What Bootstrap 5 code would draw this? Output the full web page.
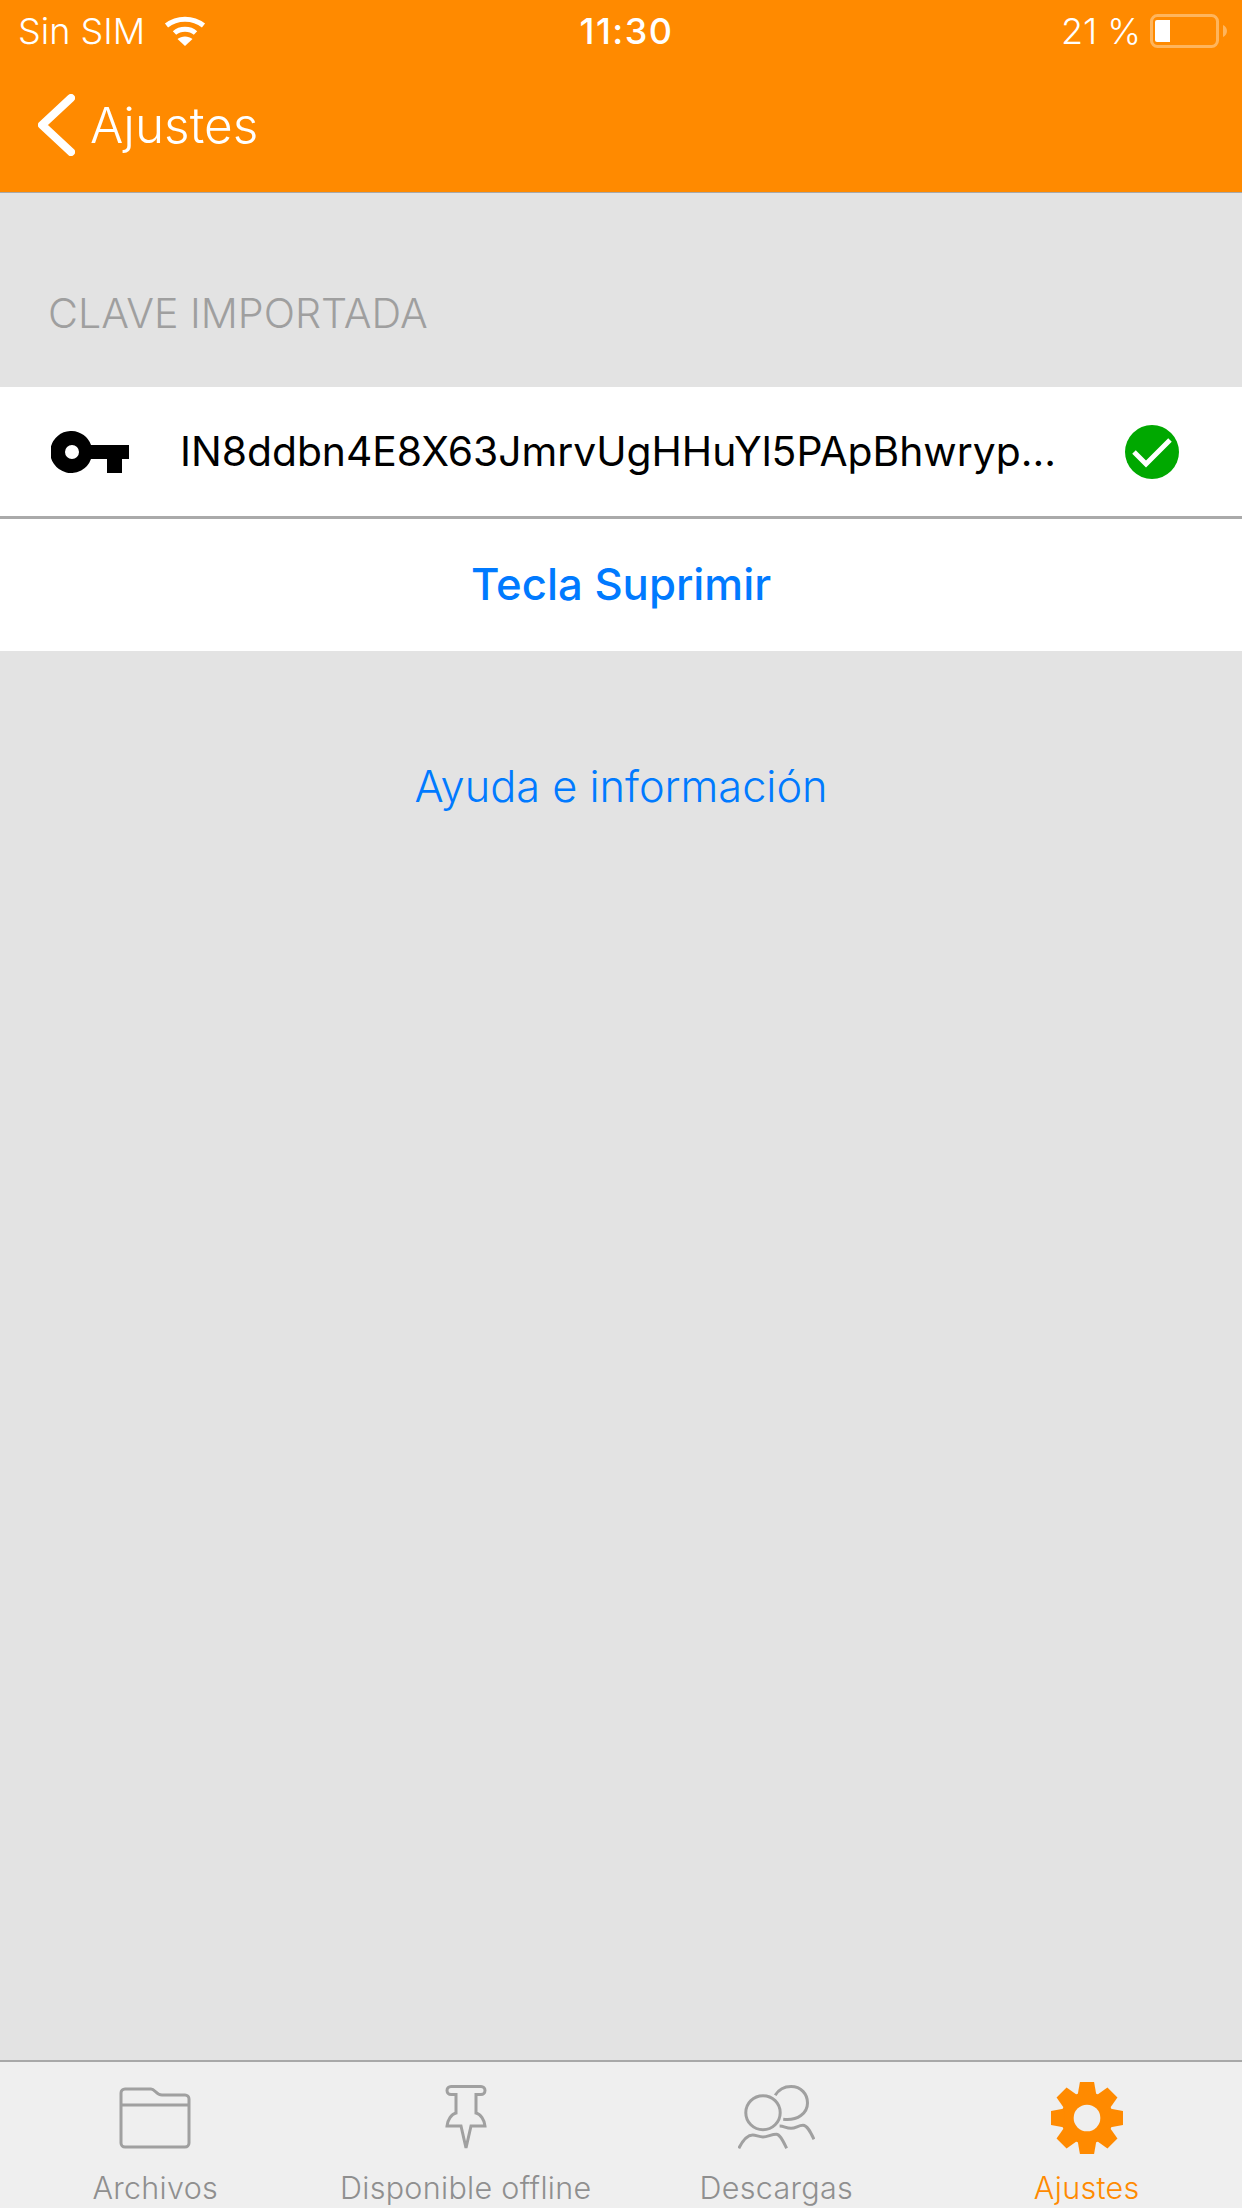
<!DOCTYPE html>
<html lang="es">
<head>
    <meta charset="UTF-8">
    <meta name="viewport" content="width=device-width, initial-scale=1.0">
    <title>Ajustes</title>
    <link href="https://cdn.jsdelivr.net/npm/bootstrap@5.3.3/dist/css/bootstrap.min.css" rel="stylesheet">
    <style>
        body {
            height: 2208px;
            overflow: hidden;
            background-color: #e3e3e3;
            font-family: Inter, "Liberation Sans", sans-serif;
        }
        .app-header {
            height: 193px;
            background-color: #ff8a00;
            border-bottom: 1px solid #a8a8a8;
            color: #fff;
        }
        .status-bar {
            height: 60px;
            padding: 2px 15px 0 18px;
            font-size: 36px;
            font-weight: 300;
            line-height: 60px;
        }
        .status-side { flex: 1 1 0; }
        .status-time { font-weight: 500; letter-spacing: 1.5px; margin-left: 8px; }
        .wifi-gap { gap: 19px; }
        .battery-gap { gap: 9px; }
        .back-row {
            height: 132px;
            padding: 0 0 2px 38px;
            font-size: 49.5px;
            font-weight: 300;
            color: #fff;
            text-decoration: none;
            gap: 15px;
        }
        .section-title {
            height: 194px;
            padding: 0 0 0 48px;
            font-size: 41.2px;
            font-weight: 300;
            color: #9f9f9f;
            line-height: 240px;
        }
        .list-group-flush > .key-row {
            height: 132px;
            padding: 0 63px 0 51px;
            border-bottom: 3px solid #aaa;
            font-size: 40.8px;
            color: #000;
        }
        .key-text { width: 895px; margin-left: 51px; }
        .list-group-flush > .delete-row {
            height: 132px;
            border: 0;
            font-size: 43.7px;
            font-weight: 450;
            color: #007aff;
        }
        .help-link {
            margin-top: 103px;
            font-size: 43.3px;
            font-weight: 300;
            color: #007aff;
            text-decoration: none;
        }
        .tab-bar {
            height: 148px;
            background-color: #efefef;
            border-top: 2px solid #a8a8a8;
            font-size: 30.5px;
            font-weight: 300;
            letter-spacing: 0.3px;
            line-height: 28px;
            color: #8f8f8f;
        }
        .tab-item { flex: 1 1 0; height: 100%; }
        .tab-icon { height: 112px; }
        .tab-item.is-active { color: #ff8a00; }
    </style>
</head>
<body class="d-flex flex-column">
    <header class="app-header">
        <div class="status-bar d-flex align-items-center">
            <div class="status-side wifi-gap d-flex align-items-center">
                <span>Sin SIM</span>
                <svg width="42" height="30" viewBox="0 0 42 30">
                    <path d="M2.500 9.500C13 1 29 1 39.500 9.500" fill="none" stroke="#fff" stroke-width="5"/>
                    <path d="M10.500 17C16 12 26 12 31.500 17" fill="none" stroke="#fff" stroke-width="5"/>
                    <path d="M21 30L13.500 23C17.500 19.500 24.500 19.500 28.500 23z" fill="#fff"/>
                </svg>
            </div>
            <div class="status-time">11:30</div>
            <div class="status-side battery-gap d-flex align-items-center justify-content-end">
                <span>21 %</span>
                <svg width="77" height="34" viewBox="0 0 77 34">
                    <rect x="1.500" y="1.500" width="66" height="31" rx="6" fill="none" stroke="#ffb55c" stroke-width="3"/>
                    <path d="M5 8a2 2 0 0 1 2-2H20V28H7a2 2 0 0 1-2-2z" fill="#fff"/>
                    <path d="M73 11c2.500 1 4 3.500 4 6s-1.500 5-4 6z" fill="#ffb55c"/>
                </svg>
            </div>
        </div>
        <a class="back-row d-flex align-items-center" href="#">
            <svg width="37" height="62" viewBox="0 0 37 62">
                <path d="M33 4L4 31L33 58" fill="none" stroke="#fff" stroke-width="8" stroke-linecap="round" stroke-linejoin="round"/>
            </svg>
            <span>Ajustes</span>
        </a>
    </header>

    <main class="flex-grow-1 d-flex flex-column">
        <div class="section-title">CLAVE IMPORTADA</div>
        <ul class="list-group list-group-flush">
            <li class="list-group-item key-row d-flex align-items-center">
                <svg width="78" height="42" viewBox="0 0 78 42" class="flex-shrink-0">
                    <path fill-rule="evenodd" d="M21 0A21 21 0 0 1 40 14H78V28H71V42H56V28H40A21 21 0 1 1 21 0zM21 14A7 7 0 1 0 21 28A7 7 0 1 0 21 14z" fill="#000"/>
                </svg>
                <span class="key-text text-truncate">IN8ddbn4E8X63JmrvUgHHuYl5PApBhwryp...</span>
                <svg width="54" height="54" viewBox="0 0 54 54" class="ms-auto flex-shrink-0">
                    <circle cx="27" cy="27" r="27" fill="#00a800"/>
                    <path d="M9 27L21 39L45 15" fill="none" stroke="#fff" stroke-width="5"/>
                </svg>
            </li>
            <li class="list-group-item delete-row d-flex align-items-center justify-content-center">Tecla Suprimir</li>
        </ul>
        <a class="help-link text-center" href="#">Ayuda e información</a>
    </main>

    <nav class="tab-bar d-flex">
        <div class="tab-item d-flex flex-column align-items-center">
            <div class="tab-icon d-flex align-items-center">
                <svg width="72" height="62" viewBox="0 0 72 62">
                    <path d="M2 6a4 4 0 0 1 4-4H32c4 0 5 6 11 6H66a4 4 0 0 1 4 4V56a4 4 0 0 1-4 4H6a4 4 0 0 1-4-4zM2 18H70" fill="none" stroke="#a0a0a0" stroke-width="3"/>
                </svg>
            </div>
            <span>Archivos</span>
        </div>
        <div class="tab-item d-flex flex-column align-items-center">
            <div class="tab-icon d-flex align-items-center">
                <svg width="42" height="66" viewBox="0 0 42 66">
                    <path d="M6 1.500H36a4 4 0 0 1 0 8H31V28C35.500 29 39.500 35 40 41H26L21 63L16 41H2C2.500 35 6.500 29 11 28V9.500H6a4 4 0 0 1 0-8z" fill="none" stroke="#a0a0a0" stroke-width="3"/>
                </svg>
            </div>
            <span>Disponible offline</span>
        </div>
        <div class="tab-item d-flex flex-column align-items-center">
            <div class="tab-icon d-flex align-items-center">
                <svg width="77" height="66" viewBox="0 0 77 66" fill="none" stroke="#a0a0a0" stroke-width="3">
                    <ellipse cx="25" cy="27.700" rx="17.200" ry="17"/>
                    <path d="M37.200 10.300C41 4 47 1.500 53 1.500C63 1.500 69.500 9 69.500 18C69.500 28 60 36 45.200 34.300"/>
                    <path d="M0.800 63.300C5 55 10 50 14.700 50C18 50 21 52 25 52C30 52 33 49.300 38.400 49.300C42 49.300 45 56 48.700 63.300"/>
                    <path d="M41.600 41C46 41 48 43.300 53 43.300C58 43.300 60 40.300 65 40.300C69 40.300 72 46 76 54.300"/>
                </svg>
            </div>
            <span>Descargas</span>
        </div>
        <div class="tab-item is-active d-flex flex-column align-items-center">
            <div class="tab-icon d-flex align-items-center">
                <svg width="72" height="72" viewBox="-36 -36 72 72">
                    <g transform="scale(1.180)" fill="#ff8a00">
                        <circle r="22"/>
                        <path d="M-6 -30.500H6L8 -19H-8z"/>
                        <path d="M-6 -30.500H6L8 -19H-8z" transform="rotate(45)"/>
                        <path d="M-6 -30.500H6L8 -19H-8z" transform="rotate(90)"/>
                        <path d="M-6 -30.500H6L8 -19H-8z" transform="rotate(135)"/>
                        <path d="M-6 -30.500H6L8 -19H-8z" transform="rotate(180)"/>
                        <path d="M-6 -30.500H6L8 -19H-8z" transform="rotate(225)"/>
                        <path d="M-6 -30.500H6L8 -19H-8z" transform="rotate(270)"/>
                        <path d="M-6 -30.500H6L8 -19H-8z" transform="rotate(315)"/>
                        <circle r="11.300" fill="#efefef"/>
                    </g>
                </svg>
            </div>
            <span>Ajustes</span>
        </div>
    </nav>
</body>
</html>
